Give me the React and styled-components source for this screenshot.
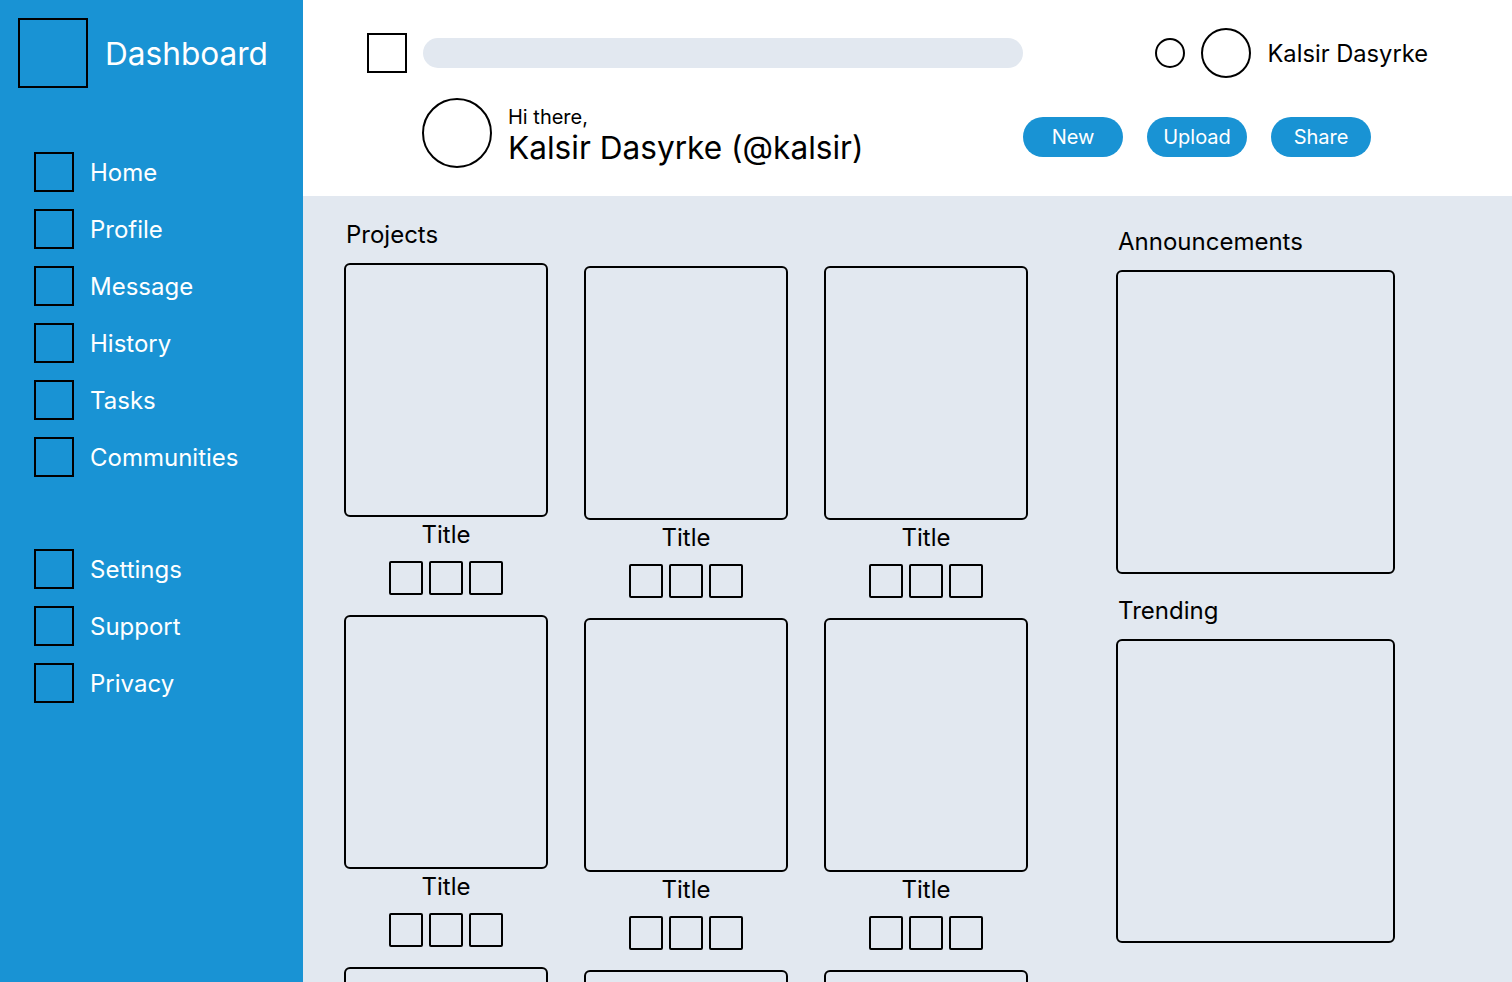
import React from 'react';
import styled, { createGlobalStyle } from 'styled-components';

const GlobalStyle = createGlobalStyle`
  * {
    box-sizing: border-box;
  }

  body {
    margin: 0;
    font-family: Inter, 'Noto Sans', sans-serif;
    color: #000000;
  }
`;

const Layout = styled.div`
  display: grid;
  grid-template-columns: 303px 1fr;
  height: 100vh;
  overflow: hidden;
`;

const Sidebar = styled.aside`
  background: #1993d4;
  padding: 18px;
  display: flex;
  flex-direction: column;
`;

const Brand = styled.div`
  display: flex;
  align-items: center;
  gap: 17px;
  color: #ffffff;
  font-size: 31.6px;
`;

const Square = styled.div`
  width: ${(p) => p.$size}px;
  height: ${(p) => p.$size}px;
  border: 2px solid #000000;
  border-radius: ${(p) => p.$radius || 0}px;
  flex-shrink: 0;
`;

const NavGroup = styled.nav`
  display: flex;
  flex-direction: column;
  gap: 17px;
  padding-left: 16px;
  margin-top: ${(p) => p.$top}px;
`;

const NavItem = styled.a`
  display: flex;
  align-items: center;
  gap: 16px;
  height: 40px;
  color: #ffffff;
  font-size: 24px;
  text-decoration: none;
  cursor: pointer;
`;

const Main = styled.main`
  display: flex;
  flex-direction: column;
  background: #e2e8f0;
  min-width: 0;
`;

const Header = styled.header`
  background: #ffffff;
  height: 196px;
  padding-top: 28px;
  display: flex;
  flex-direction: column;
  gap: 20px;
`;

const TopRow = styled.div`
  display: flex;
  align-items: center;
  height: 50px;
  padding: 0 84px 0 64px;
`;

const Search = styled.div`
  width: 600px;
  height: 30px;
  margin-left: 16px;
  border-radius: 15px;
  background: #e2e8f0;
`;

const UserBox = styled.div`
  margin-left: auto;
  display: flex;
  align-items: center;
  gap: 16px;
  font-size: 23.7px;
`;

const Circle = styled.div`
  width: ${(p) => p.$size}px;
  height: ${(p) => p.$size}px;
  border: 2px solid #000000;
  border-radius: 50%;
  flex-shrink: 0;
`;

const GreetRow = styled.div`
  display: flex;
  align-items: flex-start;
  height: 70px;
  padding: 0 141px 0 119px;
`;

const Greeting = styled.div`
  display: flex;
  flex-direction: column;
  margin: 7px 0 0 16px;
`;

const Hello = styled.span`
  font-size: 20px;
  line-height: 24px;
`;

const Name = styled.span`
  font-size: 31.6px;
  line-height: 38px;
`;

const Actions = styled.div`
  margin: 19px 0 0 auto;
  display: flex;
  gap: 24px;
`;

const Button = styled.button`
  width: 100px;
  height: 40px;
  border: none;
  border-radius: 20px;
  background: #1993d4;
  color: #ffffff;
  font-family: Inter, sans-serif;
  font-size: 20px;
  cursor: pointer;
`;

const Content = styled.div`
  display: flex;
  gap: 88px;
  padding: 24px 0 0 41px;
`;

const Heading = styled.h2`
  margin: 0;
  font-size: 24px;
  font-weight: 400;
  line-height: 29px;
  padding-left: 2px;
`;

const Projects = styled.section`
  display: flex;
  flex-direction: column;
  gap: 14px;
`;

const Columns = styled.div`
  display: flex;
  gap: 36px;
`;

const Column = styled.div`
  display: flex;
  flex-direction: column;
  gap: 20px;
  padding-top: ${(p) => p.$offset || 0}px;
`;

const ProjectCard = styled.div`
  display: flex;
  flex-direction: column;
  align-items: center;
  width: 204px;
`;

const Thumb = styled.div`
  width: 204px;
  height: 254px;
  border: 2px solid #000000;
  border-radius: 6px;
  flex-shrink: 0;
`;

const CardTitle = styled.div`
  margin-top: 4px;
  font-size: 24px;
  line-height: 28px;
`;

const Tools = styled.div`
  display: flex;
  gap: 6px;
  margin-top: 12px;
`;

const Aside = styled.section`
  display: flex;
  flex-direction: column;
  width: 279px;
  padding-top: 7px;
`;

const Panel = styled.div`
  height: 304px;
  margin: 14px 0 22px;
  border: 2px solid #000000;
  border-radius: 6px;
`;

const primaryNav = ['Home', 'Profile', 'Message', 'History', 'Tasks', 'Communities'];
const secondaryNav = ['Settings', 'Support', 'Privacy'];

function Project() {
  return (
    <ProjectCard>
      <Thumb />
      <CardTitle>Title</CardTitle>
      <Tools>
        <Square $size={34} $radius={2} />
        <Square $size={34} $radius={2} />
        <Square $size={34} $radius={2} />
      </Tools>
    </ProjectCard>
  );
}

export default function App() {
  return (
    <>
      <GlobalStyle />
      <Layout>
        <Sidebar>
          <Brand>
            <Square $size={70} />
            Dashboard
          </Brand>
          <NavGroup $top={64}>
            {primaryNav.map((label) => (
              <NavItem key={label}>
                <Square $size={40} />
                {label}
              </NavItem>
            ))}
          </NavGroup>
          <NavGroup $top={72}>
            {secondaryNav.map((label) => (
              <NavItem key={label}>
                <Square $size={40} />
                {label}
              </NavItem>
            ))}
          </NavGroup>
        </Sidebar>

        <Main>
          <Header>
            <TopRow>
              <Square $size={40} />
              <Search />
              <UserBox>
                <Circle $size={30} />
                <Circle $size={50} />
                Kalsir Dasyrke
              </UserBox>
            </TopRow>
            <GreetRow>
              <Circle $size={70} />
              <Greeting>
                <Hello>Hi there,</Hello>
                <Name>Kalsir Dasyrke (@kalsir)</Name>
              </Greeting>
              <Actions>
                <Button>New</Button>
                <Button>Upload</Button>
                <Button>Share</Button>
              </Actions>
            </GreetRow>
          </Header>

          <Content>
            <Projects>
              <Heading>Projects</Heading>
              <Columns>
                {[0, 3, 3].map((offset, i) => (
                  <Column key={i} $offset={offset}>
                    <Project />
                    <Project />
                    {/* next row starts below the fold */}
                    <Thumb />
                  </Column>
                ))}
              </Columns>
            </Projects>
            <Aside>
              <Heading>Announcements</Heading>
              <Panel />
              <Heading>Trending</Heading>
              <Panel />
            </Aside>
          </Content>
        </Main>
      </Layout>
    </>
  );
}
